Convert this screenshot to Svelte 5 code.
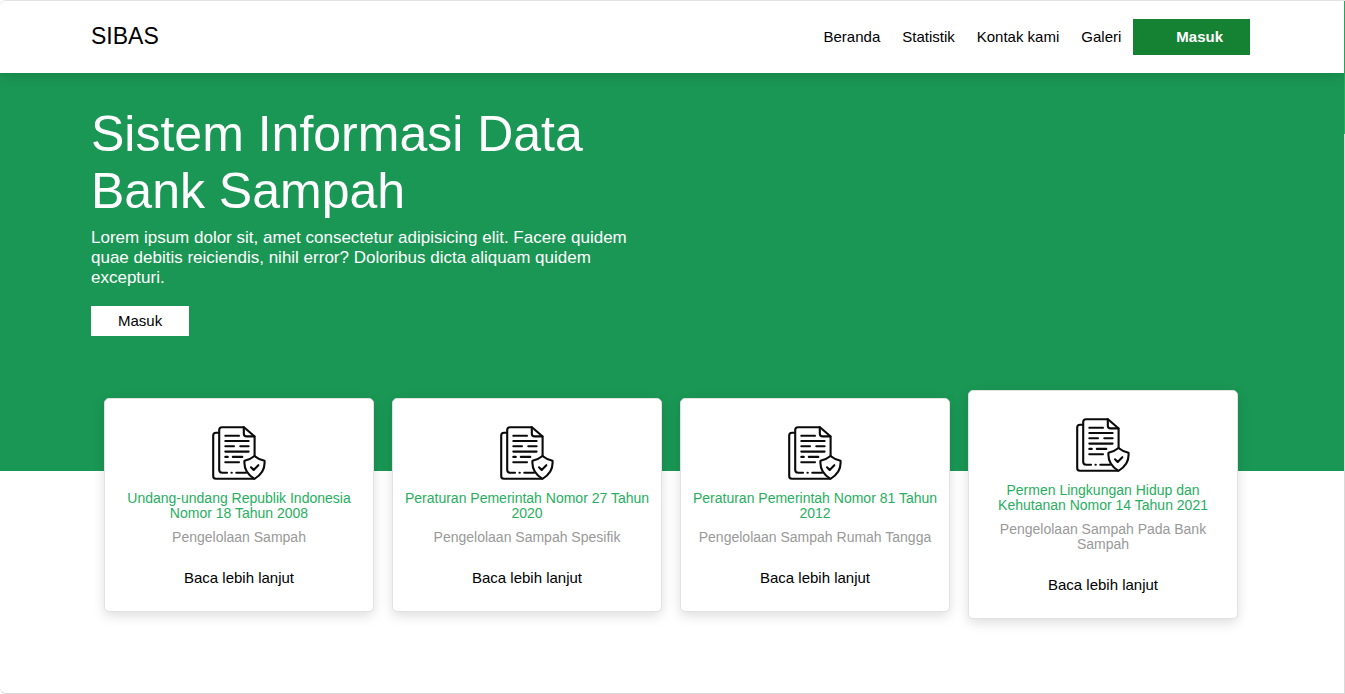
<script lang="ts">
	interface NavLink {
		href: string
		label: string
	}

	interface Regulation {
		title: string
		description: string
		href: string
	}

	const links: NavLink[] = [
		{ href: "#beranda", label: "Beranda" },
		{ href: "#statistik", label: "Statistik" },
		{ href: "#kontak", label: "Kontak kami" },
		{ href: "#galeri", label: "Galeri" },
	];

	const regulations: Regulation[] = [
		{
			title: "Undang-undang Republik Indonesia Nomor 18 Tahun 2008",
			description: "Pengelolaan Sampah",
			href: "#uu-18-2008",
		},
		{
			title: "Peraturan Pemerintah Nomor 27 Tahun 2020",
			description: "Pengelolaan Sampah Spesifik",
			href: "#pp-27-2020",
		},
		{
			title: "Peraturan Pemerintah Nomor 81 Tahun 2012",
			description: "Pengelolaan Sampah Rumah Tangga",
			href: "#pp-81-2012",
		},
		{
			title: "Permen Lingkungan Hidup dan Kehutanan Nomor 14 Tahun 2021",
			description: "Pengelolaan Sampah Pada Bank Sampah",
			href: "#permen-14-2021",
		},
	];
</script>

<style>
	:global(body) {
		background: #fff;
		color: #000;
		font-family: Arial, "Liberation Sans", sans-serif;
	}

	.shell {
		display: grid;
		grid-template-columns: minmax(0, 1fr) 1px;
		box-sizing: border-box;
		min-height: 100vh;
		border-top: 1px solid #e8e8e8;
		border-bottom: 1px solid #d4d4d4;
		border-radius: 6px 0 0 6px;
	}

	/* thin scroll indicator on the right edge */
	.track {
		background: #d9d9d9;
	}

	.thumb {
		height: 133px;
		background: #27ae60;
	}

	header {
		position: relative;
		display: flex;
		align-items: center;
		justify-content: space-between;
		height: 72px;
		padding: 0 94px 0 91px;
		background: #fff;
		border-radius: 6px 0 0;
		box-shadow: 0 4px 12px rgb(0 0 0 / 12%);
	}

	.brand {
		font-size: 23px;
		line-height: 28px;
		padding-bottom: 2px;
	}

	nav {
		display: flex;
		align-items: center;
		gap: 22px;
	}

	a {
		color: inherit;
		text-decoration: none;
	}

	nav a {
		font-size: 15px;
		line-height: 18px;
	}

	button {
		border: none;
		border-radius: 0;
		font-family: inherit;
		font-size: 15px;
		line-height: 18px;
		cursor: pointer;
	}

	.login {
		margin-left: -10px;
		padding: 9px 27px 9px 43px;
		background: #158233;
		color: #fff;
		font-weight: bold;
	}

	.hero {
		box-sizing: border-box;
		min-height: 398px;
		padding: 33px 91px 0;
		background: #1a9754;
		color: #fff;
	}

	.intro {
		max-width: 560px;
	}

	h1 {
		margin: 0 0 8px;
		font-size: 50px;
		font-weight: normal;
		line-height: 57px;
	}

	.intro p {
		margin: 0 0 18px;
		font-size: 17px;
		line-height: 20px;
	}

	.start {
		padding: 6px 27px;
		background: #fff;
		color: #000;
	}

	.cards {
		position: relative;
		display: grid;
		grid-template-columns: repeat(4, minmax(0, 1fr));
		align-items: center;
		gap: 18px;
		margin: -81px 106px 72px 104px;
	}

	.card {
		display: flex;
		flex-direction: column;
		align-items: center;
		padding: 27px 10px 24px;
		border: 1px solid #e2e2e2;
		border-radius: 5px;
		background: #fff;
		box-shadow: 0 4px 12px rgb(0 0 0 / 13%);
		text-align: center;
	}

	.card svg {
		width: 54px;
		height: 54px;
		margin-bottom: 11px;
	}

	.card h2 {
		margin: 0 0 9px;
		color: #27ae60;
		font-size: 14px;
		font-weight: normal;
		line-height: 15px;
	}

	.card p {
		margin: 0 0 24px;
		color: #999;
		font-size: 14px;
		line-height: 15px;
	}

	.card a {
		font-size: 15px;
		line-height: 18px;
	}
</style>

<div class="shell">
	<div class="page">
		<header>
			<a class="brand" href="#beranda">SIBAS</a>
			<nav>
				{#each links as { href, label }}
					<a {href}>{label}</a>
				{/each}
				<button class="login">Masuk</button>
			</nav>
		</header>

		<main>
			<section class="hero">
				<div class="intro">
					<h1>Sistem Informasi Data Bank Sampah</h1>
					<p>
						Lorem ipsum dolor sit, amet consectetur adipisicing elit. Facere quidem
						quae debitis reiciendis, nihil error? Doloribus dicta aliquam quidem
						excepturi.
					</p>
					<button class="start">Masuk</button>
				</div>
			</section>

			<section class="cards">
				{#each regulations as { title, description, href }}
					<article class="card">
						{@render documentIcon()}
						<h2>{title}</h2>
						<p>{description}</p>
						<a {href}>Baca lebih lanjut</a>
					</article>
				{/each}
			</section>
		</main>
	</div>
	<div class="track"><div class="thumb"></div></div>
</div>

{#snippet documentIcon()}
	<svg viewBox="0 0 54 54" fill="none" stroke="#0a0a0a" stroke-width="2.1" stroke-linecap="round" stroke-linejoin="round" aria-hidden="true">
		<path d="M6.5 6.8H4Q1.2 6.8 1.2 9.6V50Q1.2 52.8 4 52.8H42" />
		<path d="M15 46.8H10.2Q7.2 46.8 7.2 43.8V4Q7.2 1.2 10 1.2H32L42.6 10.5V30" />
		<path d="M31.8 1.4V7.5Q31.8 10.4 34.7 10.4H42.4" />
		<path d="M19.5 46.8H19.8M24.3 46.8H34" />
		<path d="M13.3 9.7H27M13.3 15H36.6M13.3 20.3H22M28.3 20.3H36.6M13.3 25.6H36.6M13.3 30.9H15.8M20.8 30.9H30.3M13.3 36.2H27" />
		<path d="M42.5 30Q46.8 33.6 52.5 34.7Q53.6 46.5 42.5 52.8Q31.4 46.5 32.5 34.7Q38.2 33.6 42.5 30Z" fill="#fff" />
		<path d="M39 41.3L41.7 44L46.3 39.2" />
	</svg>
{/snippet}
